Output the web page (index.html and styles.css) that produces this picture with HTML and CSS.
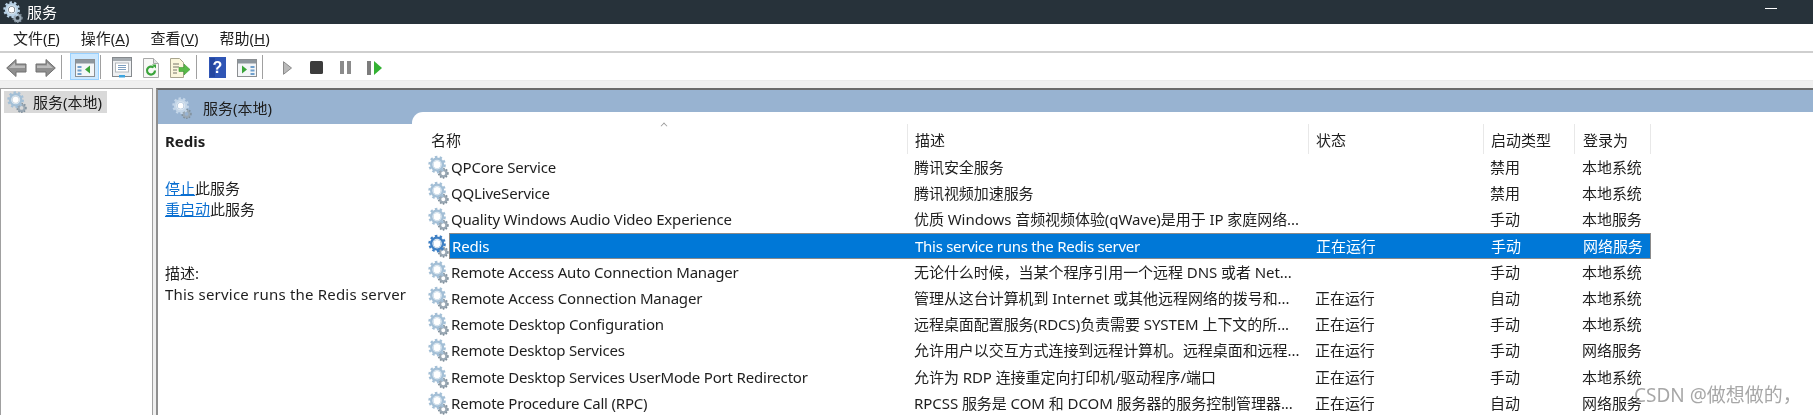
FILE: index.html
```html
<!DOCTYPE html>
<html lang="zh">
<head>
<meta charset="utf-8">
<title>服务</title>
<link rel="stylesheet" href="styles.css">
</head>
<body>
<svg class="defs" xmlns="http://www.w3.org/2000/svg">
  <symbol id="gear" viewBox="0 0 22 24">
    <circle cx="16" cy="18.5" r="3.4" fill="none" stroke="#9aa8b4" stroke-width="2.6"/>
    <circle cx="16" cy="18.5" r="4.9" fill="none" stroke="#7f8f9b" stroke-width="1.6" stroke-dasharray="1.6 1.6"/>
    <circle cx="9.5" cy="9.5" r="8" fill="none" stroke="currentColor" stroke-width="2.4" stroke-dasharray="2.6 2.42"/>
    <circle cx="9.5" cy="9.5" r="5.6" fill="none" stroke="currentColor" stroke-width="3.6"/>
    <circle cx="9.5" cy="9.5" r="4.4" fill="none" stroke="#dbe6ef" stroke-width="1.2"/>
    <circle cx="9.5" cy="9.5" r="3.2" fill="#fff"/>
  </symbol>
</svg>

<header class="titlebar">
  <svg class="gear gear-title"><use href="#gear"/></svg>
  <span class="title">服务</span>
  <span class="minimize"></span>
</header>

<nav class="menubar">
  <span class="menu">文件(<u>F</u>)</span>
  <span class="menu">操作(<u>A</u>)</span>
  <span class="menu">查看(<u>V</u>)</span>
  <span class="menu">帮助(<u>H</u>)</span>
</nav>

<div class="toolbar">
  <span class="tool"><svg width="21" height="20" viewBox="0 0 21 20"><path d="M.7 10 10 1.500V6h10v8H10v4.500z" fill="#8f8f8f" stroke="#707070"/><path d="M3 10 9 4.500V7.500h10V10z" fill="#bcbcbc"/></svg></span>
  <span class="tool"><svg width="21" height="20" viewBox="0 0 21 20"><path d="M20.300 10 11 1.500V6H1v8h10v4.500z" fill="#8f8f8f" stroke="#707070"/><path d="M2 7.500h10v-3l6 5.500H2z" fill="#bcbcbc"/></svg></span>
  <span class="sep sep-wide"></span>
  <span class="tool tool-on"><svg width="20" height="18" viewBox="0 0 20 18"><rect x=".5" y=".5" width="19" height="17" fill="#f4f6f8" stroke="#8c8f92"/><rect x="1" y="1" width="18" height="3.500" fill="#8d969d"/><rect x="2.500" y="7" width="4" height="2" fill="#6f9fcc"/><rect x="2.500" y="10.500" width="4" height="2" fill="#6f9fcc"/><rect x="2.500" y="14" width="4" height="2" fill="#6f9fcc"/><path d="M15 6.500v8l-5-4z" fill="#3aa43a"/></svg></span>
  <span class="sep sep-mid"></span>
  <span class="tool"><svg width="20" height="21" viewBox="0 0 20 21"><rect x=".5" y=".5" width="19" height="19" fill="#eef0f2" stroke="#85898d"/><rect x="1" y="1" width="18" height="3" fill="#a5abb0"/><rect x="3.500" y="6" width="13" height="9" fill="#fff" stroke="#b4b8bc"/><path d="M6 8.500h8M6 10.500h8M6 12.500h8" stroke="#7d9fc0"/><rect x="7" y="18" width="6" height="2.500" fill="#3da5e0"/></svg></span>
  <span class="tool"><svg width="16" height="20" viewBox="0 0 16 20"><path d="M.5.5h10l5 5v14H.5z" fill="#f8f8f6" stroke="#a8a8a8"/><path d="M10.500.5v5h5" fill="#e4e4e4" stroke="#a8a8a8"/><path d="M12 12.500a4 4 0 1 1-1.400-3" fill="none" stroke="#3aa43a" stroke-width="2.200"/><path d="M9 6.500h4v4z" fill="#3aa43a"/></svg></span>
  <span class="tool"><svg width="20" height="20" viewBox="0 0 20 20"><path d="M.5.5h9l4 4v15H.5z" fill="#fbf6dc" stroke="#a8a48e"/><path d="M3 6h6M3 9h6M3 12h4M3 15h4" stroke="#77746a"/><path d="M9 9.500h5V6l6 5.500-6 5.500v-3.500H9z" fill="#58b947" stroke="#3f9a35" stroke-width=".6"/></svg></span>
  <span class="sep sep-help"></span>
  <span class="tool"><svg width="17" height="21" viewBox="0 0 17 21"><rect width="17" height="21" fill="#2f55b5"/><rect x="1" y="1" width="5" height="19" fill="#24469f"/><text class="help-mark" x="8.500" y="16">?</text></svg></span>
  <span class="tool"><svg width="20" height="18" viewBox="0 0 20 18"><rect x=".5" y=".5" width="19" height="17" fill="#f4f6f8" stroke="#8c8f92"/><rect x="1" y="1" width="18" height="3.500" fill="#8d969d"/><rect x="13.500" y="7" width="4" height="2" fill="#6f9fcc"/><rect x="13.500" y="10.500" width="4" height="2" fill="#6f9fcc"/><rect x="13.500" y="14" width="4" height="2" fill="#6f9fcc"/><path d="M5 6.500v8l5-4z" fill="#3aa43a"/></svg></span>
  <span class="sep sep-end"></span>
  <span class="tool"><svg width="9" height="14" viewBox="0 0 9 14"><path d="M.5.700 8.500 7 .5 13.300z" fill="#b9b9b9" stroke="#8a8a8a"/></svg></span>
  <span class="tool"><svg width="13" height="13" viewBox="0 0 13 13"><rect width="13" height="13" rx="1.500" fill="#3c3c3c"/></svg></span>
  <span class="tool"><svg width="11" height="13" viewBox="0 0 11 13"><rect width="4" height="13" fill="#8b8b8b"/><rect x="7" width="4" height="13" fill="#8b8b8b"/></svg></span>
  <span class="tool"><svg width="15" height="14" viewBox="0 0 15 14"><rect width="4" height="14" fill="#7c7c7c"/><path d="M7 0 15 7 7 14z" fill="#34b233"/></svg></span>
</div>

<main class="workspace">
  <aside class="tree">
    <div class="tree-item">
      <svg class="gear gear-small"><use href="#gear"/></svg>
      <span>服务(本地)</span>
    </div>
  </aside>

  <section class="pane">
    <div class="pane-head">
      <svg class="gear gear-small"><use href="#gear"/></svg>
      <span class="pane-title">服务(本地)</span>
    </div>
    <div class="pane-body">
      <div class="detail">
        <h2 class="detail-name">Redis</h2>
        <p class="actions"><a href="#">停止</a>此服务<br><a href="#">重启动</a>此服务</p>
        <p class="about">描述:<br><span class="about-text">This service runs the Redis server</span></p>
      </div>

      <div class="list">
        <div class="list-head">
          <span class="hcell hcell-name">名称<i class="caret"></i></span>
          <span class="hcell">描述</span>
          <span class="hcell">状态</span>
          <span class="hcell">启动类型</span>
          <span class="hcell hcell-last">登录为</span>
        </div>

        <div class="row"><svg class="gear gear-row"><use href="#gear"/></svg><div class="cells"><span>QPCore Service</span><span>腾讯安全服务</span><span></span><span>禁用</span><span>本地系统</span></div></div>
        <div class="row"><svg class="gear gear-row"><use href="#gear"/></svg><div class="cells"><span>QQLiveService</span><span>腾讯视频加速服务</span><span></span><span>禁用</span><span>本地系统</span></div></div>
        <div class="row"><svg class="gear gear-row"><use href="#gear"/></svg><div class="cells"><span>Quality Windows Audio Video Experience</span><span>优质 Windows 音频视频体验(qWave)是用于 IP 家庭网络...</span><span></span><span>手动</span><span>本地服务</span></div></div>
        <div class="row row-on"><svg class="gear gear-row"><use href="#gear"/></svg><div class="cells"><span>Redis</span><span class="latin-desc">This service runs the Redis server</span><span>正在运行</span><span>手动</span><span>网络服务</span></div></div>
        <div class="row"><svg class="gear gear-row"><use href="#gear"/></svg><div class="cells"><span>Remote Access Auto Connection Manager</span><span>无论什么时候，当某个程序引用一个远程 DNS 或者 Net...</span><span></span><span>手动</span><span>本地系统</span></div></div>
        <div class="row"><svg class="gear gear-row"><use href="#gear"/></svg><div class="cells"><span>Remote Access Connection Manager</span><span>管理从这台计算机到 Internet 或其他远程网络的拨号和...</span><span>正在运行</span><span>自动</span><span>本地系统</span></div></div>
        <div class="row"><svg class="gear gear-row"><use href="#gear"/></svg><div class="cells"><span>Remote Desktop Configuration</span><span>远程桌面配置服务(RDCS)负责需要 SYSTEM 上下文的所...</span><span>正在运行</span><span>手动</span><span>本地系统</span></div></div>
        <div class="row"><svg class="gear gear-row"><use href="#gear"/></svg><div class="cells"><span>Remote Desktop Services</span><span>允许用户以交互方式连接到远程计算机。远程桌面和远程...</span><span>正在运行</span><span>手动</span><span>网络服务</span></div></div>
        <div class="row"><svg class="gear gear-row"><use href="#gear"/></svg><div class="cells"><span>Remote Desktop Services UserMode Port Redirector</span><span>允许为 RDP 连接重定向打印机/驱动程序/端口</span><span>正在运行</span><span>手动</span><span>本地系统</span></div></div>
        <div class="row"><svg class="gear gear-row"><use href="#gear"/></svg><div class="cells"><span>Remote Procedure Call (RPC)</span><span>RPCSS 服务是 COM 和 DCOM 服务器的服务控制管理器...</span><span>正在运行</span><span>自动</span><span>网络服务</span></div></div>
      </div>
    </div>
  </section>
</main>

<div class="watermark">CSDN @做想做的，</div>
</body>
</html>
```
FILE: styles.css
```css
* { box-sizing: border-box; }

html, body {
  margin: 0;
  height: 415px;
  overflow: hidden;
  background: #fff;
}

body {
  display: flex;
  flex-direction: column;
  font: 15px/20px "Noto Sans", "Noto Sans CJK SC", sans-serif;
  color: #1e1e1e;
  position: relative;
  filter: blur(.35px);
}

.defs { display: none; }

.gear { color: #a3bfd6; flex: none; }
.gear-title { width: 20px; height: 22px; color: #b9d2e6; }
.gear-small { width: 20px; height: 22px; }
.gear-row { width: 21px; height: 24px; margin-left: 4px; }

.titlebar {
  height: 24px;
  background: #27323a;
  color: #fff;
  display: flex;
  align-items: center;
  padding-left: 3px;
  flex: none;
}
.title { margin-left: 4px; }
.minimize {
  width: 12px;
  height: 1px;
  background: #fff;
  margin-left: auto;
  margin-right: 36px;
  margin-top: -7px;
}

.menubar {
  height: 29px;
  flex: none;
  display: flex;
  align-items: center;
  gap: 21px;
  padding-left: 13px;
  border-bottom: 2px solid #cfcfcf;
}
.menu { white-space: nowrap; }

.toolbar {
  height: 28px;
  flex: none;
  display: flex;
  align-items: center;
  padding-left: 2px;
  border-bottom: 1px solid #ebebeb;
}
.tool {
  width: 29px;
  height: 27px;
  display: flex;
  align-items: center;
  justify-content: center;
  flex: none;
}
.tool svg { margin-top: 2px; }
.tool-on {
  background: #cce8ff;
  border: 1px solid #99d1ff;
}
.sep { width: 1px; height: 24px; background: #a0a0a0; flex: none; margin-left: 1px; }
.sep-wide { margin-right: 8px; }
.sep-mid { margin-right: 6px; }
.sep-help { margin-left: 2px; margin-right: 6px; }
.sep-end { margin-right: 10px; }
.help-mark {
  font: 700 16px "Liberation Sans", sans-serif;
  fill: #fff;
  text-anchor: middle;
}

.workspace {
  flex: 1;
  min-height: 0;
  display: flex;
  background: #f0f0f0;
  padding-top: 7px;
}

.tree {
  width: 153px;
  flex: none;
  background: #fff;
  border: 1px solid #a0a0a0;
  border-width: 1px 1px 0 1px;
  padding: 2px 3px;
}
.tree-item {
  width: 103px;
  height: 22px;
  background: #d9d9d9;
  display: flex;
  align-items: center;
  gap: 6px;
  padding-left: 3px;
  white-space: nowrap;
}

.pane {
  flex: 1;
  margin-left: 3px;
  background: #fff;
  border-top: 2px solid #6b6b6b;
  border-left: 2px solid #8f8f8f;
  display: flex;
  flex-direction: column;
  min-width: 0;
}
.pane-head {
  height: 34px;
  flex: none;
  background: #98b3d1;
  display: flex;
  align-items: flex-start;
  gap: 11px;
  padding: 7px 0 0 14px;
  white-space: nowrap;
}
.pane-head .gear { color: #c4d6e8; }
.pane-title { padding-top: 1px; }

.pane-body {
  flex: 1;
  min-height: 0;
  display: flex;
}

.detail {
  width: 254px;
  flex: none;
  padding: 7px 0 0 7px;
}
.detail-name {
  margin: 0;
  font-size: 15px;
  line-height: 20px;
  font-weight: 700;
}
.actions {
  margin: 27px 0 0;
  line-height: 21px;
}
.actions a { color: #0a6fd1; }
.about {
  margin: 43px 0 0;
  line-height: 21px;
}
.about-text {
  white-space: nowrap;
  letter-spacing: .2px;
}

.list {
  flex: 1;
  min-width: 0;
  margin-top: -12px;
  background: #fff;
  border-top-left-radius: 11px;
  padding: 12px 0 0 0;
  position: relative;
}

.list-head {
  display: grid;
  grid-template-columns: 495px 401px 175px 91px 77px;
  height: 30px;
}
.hcell {
  border-left: 1px solid #e8e8e8;
  padding: 6px 0 0 7px;
  position: relative;
}
.hcell-name {
  border-left: 0;
  padding-left: 19px;
}
.hcell-last {
  border-right: 1px solid #e8e8e8;
  padding-left: 8px;
}
.caret {
  position: absolute;
  left: 249px;
  top: -1px;
  width: 6px;
  height: 6px;
  border-top: 1px solid #9a9a9a;
  border-left: 1px solid #9a9a9a;
  transform: rotate(45deg) scale(.8);
}

.row {
  display: flex;
  align-items: center;
  height: 26.2px;
  margin-left: 12px;
  white-space: nowrap;
}
.cells {
  display: grid;
  grid-template-columns: 458px 401px 175px 91px 77px;
  height: 26.2px;
  align-items: center;
  flex: none;
  width: 1202px;
}
.cells span {
  padding-left: 7px;
  overflow: hidden;
  white-space: nowrap;
  letter-spacing: -.06px;
}
.cells span:first-child {
  padding-left: 2px;
  letter-spacing: -.19px;
}
.cells span:last-child { padding-left: 8px; }
.cells .latin-desc { letter-spacing: -.28px; }

.row-on .gear { color: #3d7fc4; }
.row-on .cells {
  background: #0078d7;
  color: #fff;
  border: 1px solid #8a8a8a;
}

.watermark {
  position: absolute;
  left: 1634px;
  top: 383px;
  font-size: 19px;
  line-height: 24px;
  color: rgba(130, 130, 130, .7);
  white-space: nowrap;
}
```
